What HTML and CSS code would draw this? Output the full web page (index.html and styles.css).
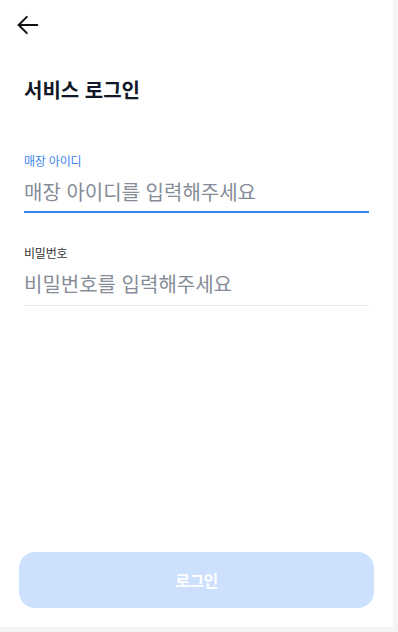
FILE: index.html
```html
<!DOCTYPE html>
<html lang="ko">
<head>
  <meta charset="UTF-8" />
  <meta name="viewport" content="width=device-width, initial-scale=1.0"/>
  <title>서비스 로그인</title>
  <link rel="stylesheet" href="styles.css">
</head>
<body>

  <div class="page">
    <div class="header">
      <button class="back-btn" type="button" aria-label="뒤로가기">
        <svg width="28" height="28" viewBox="0 0 24 24" fill="none" stroke="#111" stroke-width="1.7" stroke-linecap="round" stroke-linejoin="round">
          <path d="M20 12H4"/>
          <path d="M11 5l-7 7 7 7"/>
        </svg>
      </button>
    </div>

    <h1 class="title">서비스 로그인</h1>

    <div class="field field-active">
      <label class="field-label" for="storeId">매장 아이디</label>
      <input class="field-input" type="text" id="storeId" placeholder="매장 아이디를 입력해주세요">
    </div>

    <div class="field">
      <label class="field-label" for="password">비밀번호</label>
      <input class="field-input" type="password" id="password" placeholder="비밀번호를 입력해주세요">
    </div>

    <button class="login-btn" type="button" disabled>로그인</button>
  </div>

</body>
</html>
```

FILE: styles.css
```css
html, body {
  margin: 0;
  padding: 0;
}
body {
  background: #f4f4f5;
  font-family: "Noto Sans CJK KR", "Noto Sans", sans-serif;
  color: #111827;
}
.page {
  width: 393px;
  height: 627px;
  background: #fff;
  display: flex;
  flex-direction: column;
  box-sizing: border-box;
}
.header {
  height: 50px;
  display: flex;
  align-items: center;
  padding-left: 14px;
}
.back-btn {
  border: none;
  background: none;
  padding: 0;
  width: 28px;
  height: 28px;
  display: flex;
}
.title {
  margin: 26px 24px 0;
  font-size: 20px;
  line-height: 28px;
  font-weight: 700;
  letter-spacing: 0;
}
.field {
  margin: 49px 24px 0;
  display: flex;
  flex-direction: column;
}
.field + .field {
  margin-top: 32px;
}
.field-label {
  font-size: 12px;
  line-height: 16px;
  color: #333;
  letter-spacing: -0.2px;
}
.field-active .field-label {
  color: #3b86ee;
}
.field-input {
  margin-top: 7px;
  border: none;
  border-bottom: 1px solid #e8e9eb;
  outline: none;
  padding: 0 0 7px;
  height: 38px;
  box-sizing: border-box;
  font-family: inherit;
  font-size: 20px;
  line-height: 30px;
  letter-spacing: 0;
  color: #111;
  background: transparent;
}
.field-active .field-input {
  border-bottom: 2px solid #3b86ee;
  padding-bottom: 5px;
  height: 37px;
}
.field-input::placeholder {
  color: #858c97;
}
.login-btn {
  margin: auto 19px 19px;
  height: 56px;
  border: none;
  border-radius: 16px;
  background: #cde0fd;
  color: #fff;
  font-family: inherit;
  font-size: 16px;
  font-weight: 700;
  letter-spacing: -0.5px;
}
```
